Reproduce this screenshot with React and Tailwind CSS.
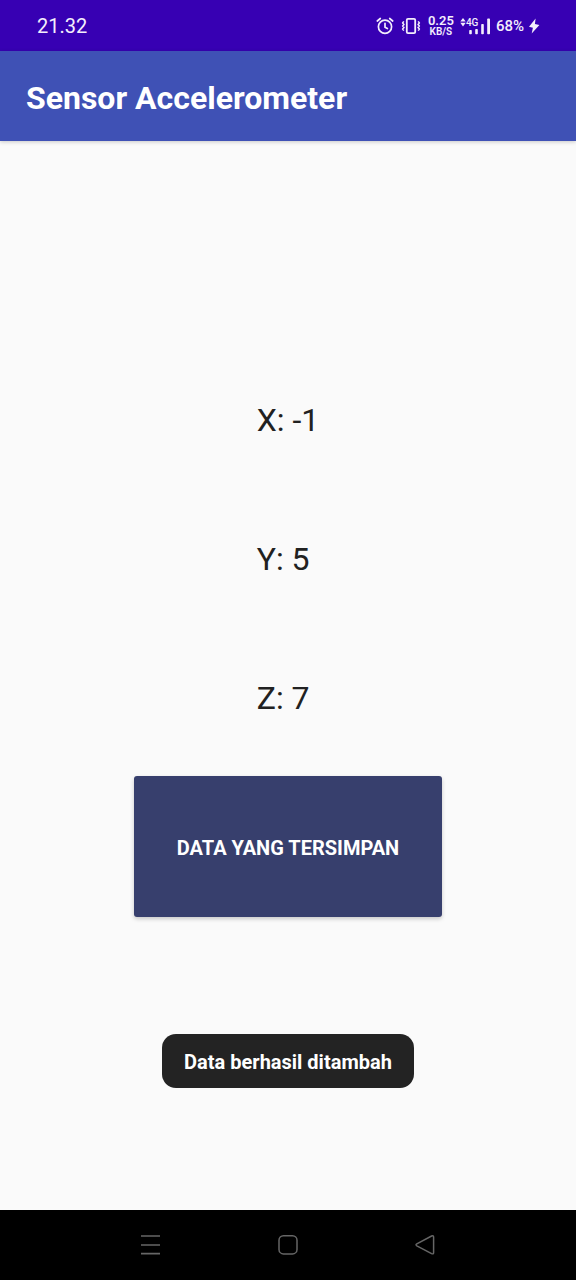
const readings = [
  { axis: "X", value: -1 },
  { axis: "Y", value: 5 },
  { axis: "Z", value: 7 },
];

function AlarmIcon() {
  return (
    <svg width="18" height="18" viewBox="0 0 18 18" fill="none" stroke="currentColor" strokeWidth="1.7" strokeLinecap="round" strokeLinejoin="round" aria-hidden="true">
      <circle cx="9" cy="9.8" r="6.6" />
      <path d="M9 6.3v3.9l2.4 1.3M1.3 4 4.3 1.5M16.7 4l-3-2.5" />
    </svg>
  );
}

function VibrateIcon() {
  return (
    <svg width="20" height="18" viewBox="0 0 20 18" fill="none" stroke="currentColor" strokeLinejoin="round" aria-hidden="true">
      <rect x="5.8" y="1.8" width="8.4" height="14.4" rx="1.2" strokeWidth="1.8" />
      <path strokeWidth="1.5" d="m2.8 4.4-1.2 1.6 1.4 1.5-1.4 1.5L3 10.5 1.6 12l1.2 1.6M17.2 4.4l1.2 1.6L17 7.5l1.4 1.5-1.4 1.5 1.4 1.5-1.2 1.6" />
    </svg>
  );
}

function SignalIcon() {
  return (
    <div className="relative h-[18px] w-[31px]">
      <svg width="31" height="18" viewBox="0 0 31 18" fill="currentColor" aria-hidden="true">
        <path d="M3 1 5.7 4.6H.3ZM3 9.4.3 5.8h5.4Z" />
        <rect x="9.2" y="13" width="2.6" height="4.2" rx=".8" />
        <rect x="15.2" y="12" width="2.6" height="5.2" rx=".8" />
        <rect x="21.2" y="7" width="2.6" height="10.2" rx=".8" />
        <rect x="27.2" y="1.5" width="2.8" height="15.7" rx=".8" />
      </svg>
      <span className="absolute top-0 left-[6px] text-[10px] leading-[12px] font-medium">4G</span>
    </div>
  );
}

function BoltIcon() {
  return (
    <svg width="12" height="16" viewBox="0 0 12 16" fill="currentColor" aria-hidden="true">
      <path d="M7.6.6 1 8.8l3.9.9-1.2 5.7 7.7-8.4-4.5-.9Z" />
    </svg>
  );
}

function StatusBar() {
  return (
    <div className="flex h-[51px] items-center justify-between bg-[#3700b3] pr-9 pl-[37px] text-[#f3eefc]">
      <time className="text-[20px] leading-6">21.32</time>
      <div className="flex items-center">
        <AlarmIcon />
        <span className="ml-[7px] flex"><VibrateIcon /></span>
        <div className="ml-[7px] flex w-[26px] flex-col items-center font-semibold">
          <span className="text-[13px] leading-[12px]">0.25</span>
          <span className="text-[10px] leading-[10px]">KB/S</span>
        </div>
        <span className="ml-[6px] flex"><SignalIcon /></span>
        <span className="ml-[5px] text-[15px] leading-5 font-medium">68%</span>
        <span className="ml-1 flex"><BoltIcon /></span>
      </div>
    </div>
  );
}

function NavigationBar() {
  return (
    <nav className="flex h-[70px] items-center justify-center gap-[113px] bg-black text-[#666]">
      <button type="button" aria-label="Recent apps" className="flex">
        <svg width="24" height="24" viewBox="0 0 24 24" stroke="currentColor" strokeWidth="1.6">
          <path d="M2 3h19M2 12h19M2 20.6h19" />
        </svg>
      </button>
      <button type="button" aria-label="Home" className="flex">
        <svg width="24" height="24" viewBox="0 0 24 24" fill="none" stroke="currentColor" strokeWidth="1.5">
          <rect x="3" y="2.7" width="18" height="18.2" rx="4.5" />
        </svg>
      </button>
      <button type="button" aria-label="Back" className="flex">
        <svg width="24" height="24" viewBox="0 0 24 24" fill="none" stroke="currentColor" strokeWidth="1.5" strokeLinejoin="round">
          <path d="M3.8 10.8 18.6 3q2-.9 2 1.2v15.2q0 2.1-2 1.2L3.8 12.8q-1.6-1 0-2Z" />
        </svg>
      </button>
    </nav>
  );
}

export default function App() {
  return (
    <div className="flex min-h-screen flex-col bg-[#fafafa] font-['Roboto',sans-serif]">
      <StatusBar />
      <header className="flex h-[90px] items-center bg-[#3f51b5] px-[26px] pt-1 text-white shadow-[0_1px_4px_rgba(0,0,0,0.2)]">
        <h1 className="text-[32px] leading-10 font-bold">Sensor Accelerometer</h1>
      </header>
      <main className="relative flex flex-1 flex-col items-center pt-[259px]">
        <div className="flex flex-col gap-[99px] text-[32px] leading-10 text-[#212121]">
          {readings.map(({ axis, value }) => (
            <p key={axis}>{`${axis}: ${value}`}</p>
          ))}
        </div>
        <button type="button" className="mt-[58px] h-[141px] rounded-[3px] bg-[#373f6d] px-[43px] pt-0.5 text-[20px] font-bold text-white uppercase shadow-[0_2px_4px_rgba(0,0,0,0.2)]">
          Data yang tersimpan
        </button>
        <div role="status" className="absolute bottom-[122px] rounded-[14px] bg-[#232323] px-[22px] pt-4 pb-[14px] text-[20px] leading-6 font-bold whitespace-nowrap text-white">
          Data berhasil ditambah
        </div>
      </main>
      <NavigationBar />
    </div>
  );
}
